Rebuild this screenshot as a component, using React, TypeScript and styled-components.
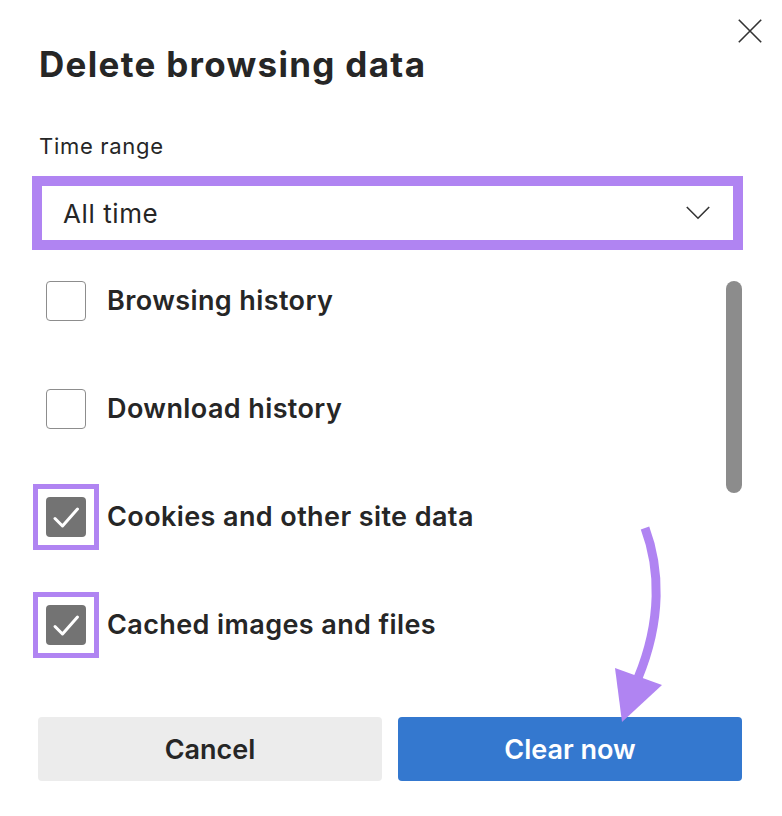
import React from "react";
import styled, { createGlobalStyle, css } from "styled-components";

const PURPLE = "#b084f2";
const INK = "#262626";

const Global = createGlobalStyle`
  html, body { margin: 0; padding: 0; background: #ffffff; }
  body { font-family: Inter, "Open Sans", "Liberation Sans", sans-serif; color: ${INK}; }
  * { box-sizing: border-box; }
`;

const Dialog = styled.div`
  position: relative;
  width: 782px;
  height: 816px;
  padding: 0 40px 0 38px;
  overflow: hidden;
`;

const Header = styled.div`
  display: flex;
  justify-content: space-between;
  align-items: flex-start;
  padding-top: 19px;
  margin-right: -20px;
`;

const Title = styled.h1`
  margin: 24px 0 0 1px;
  font-size: 35px;
  line-height: 42px;
  font-weight: 700;
  letter-spacing: 1.3px;
`;

const CloseButton = styled.button`
  width: 24px;
  height: 24px;
  padding: 0;
  border: none;
  background: transparent;
  display: flex;
  cursor: pointer;
`;

const FieldLabel = styled.div`
  margin-top: 48px;
  padding-left: 1px;
  font-size: 22px;
  line-height: 26px;
  font-weight: 400;
  letter-spacing: 0.7px;
`;

const Dropdown = styled.div<{ $highlight?: boolean }>`
  margin: 17px -1px 0 -6px;
  height: 74px;
  display: flex;
  align-items: center;
  justify-content: space-between;
  padding: 0 32px 0 30px;
  font-size: 26px;
  font-weight: 400;
  letter-spacing: 0.6px;
  background: #fff;
  border: 1px solid #8d8d8d;
  ${(p) =>
    p.$highlight &&
    css`
      border: 10px solid ${PURPLE};
      padding: 0 23px 0 21px;
    `}
`;

const List = styled.div`
  display: flex;
  margin-top: 31px;
`;

const Items = styled.div`
  flex: 1;
  display: flex;
  flex-direction: column;
  gap: 68px;
  padding-left: 8px;
`;

const ScrollTrack = styled.div`
  width: 16px;
`;

const ScrollThumb = styled.div`
  height: 212px;
  border-radius: 8px;
  background: #8c8c8c;
`;

const Row = styled.label`
  display: flex;
  align-items: center;
  gap: 21px;
  height: 40px;
`;

const Box = styled.span<{ $checked?: boolean; $highlight?: boolean }>`
  position: relative;
  flex: none;
  width: 40px;
  height: 40px;
  border-radius: 4px;
  display: flex;
  align-items: center;
  justify-content: center;
  border: 1.5px solid #8d8d8d;
  background: #fff;
  ${(p) =>
    p.$checked &&
    css`
      border: none;
      background: #737373;
    `}
  ${(p) =>
    p.$highlight &&
    css`
      &::after {
        content: "";
        position: absolute;
        left: -13px;
        top: -13px;
        width: 66px;
        height: 66px;
        border: 5px solid ${PURPLE};
        box-sizing: border-box;
      }
    `}
`;

const ItemText = styled.span`
  font-size: 27px;
  line-height: 32px;
  font-weight: 600;
  letter-spacing: 0.4px;
`;

const Actions = styled.div`
  display: grid;
  grid-template-columns: 1fr 1fr;
  gap: 16px;
  margin-top: 72px;
`;

const Button = styled.button<{ $primary?: boolean }>`
  height: 64px;
  border: none;
  border-radius: 4px;
  font-family: inherit;
  font-size: 27px;
  font-weight: 600;
  cursor: pointer;
  background: ${(p) => (p.$primary ? "#3478cf" : "#ececec")};
  color: ${(p) => (p.$primary ? "#ffffff" : INK)};
`;

const Annotation = styled.svg`
  position: absolute;
  left: 600px;
  top: 520px;
  width: 80px;
  height: 210px;
  pointer-events: none;
`;

const items = [
  { label: "Browsing history", checked: false },
  { label: "Download history", checked: false },
  { label: "Cookies and other site data", checked: true },
  { label: "Cached images and files", checked: true },
];

const Check = () => (
  <svg width="40" height="40" viewBox="0 0 40 40" fill="none">
    <path d="M9 21.5 L16.5 29 L31.5 12" stroke="#fff" strokeWidth="3" strokeLinecap="round" strokeLinejoin="round" />
  </svg>
);

export default function App() {
  return (
    <>
      <Global />
      <Dialog>
        <Header>
          <Title>Delete browsing data</Title>
          <CloseButton aria-label="Close">
            <svg width="24" height="24" viewBox="0 0 24 24" fill="none">
              <path d="M0.8 0.8 L23.2 23.2 M23.2 0.8 L0.8 23.2" stroke="#333" strokeWidth="1.6" />
            </svg>
          </CloseButton>
        </Header>
        <FieldLabel>Time range</FieldLabel>
        <Dropdown $highlight>
          <span>All time</span>
          <svg width="24" height="14" viewBox="0 0 24 14" fill="none">
            <path d="M0.8 1 L12 12.2 L23.2 1" stroke="#333" strokeWidth="1.6" />
          </svg>
        </Dropdown>
        <List>
          <Items>
            {items.map((it) => (
              <Row key={it.label}>
                <Box $checked={it.checked} $highlight={it.checked}>
                  {it.checked && <Check />}
                </Box>
                <ItemText>{it.label}</ItemText>
              </Row>
            ))}
          </Items>
          <ScrollTrack>
            <ScrollThumb />
          </ScrollTrack>
        </List>
        <Actions>
          <Button>Cancel</Button>
          <Button $primary>Clear now</Button>
        </Actions>
        <Annotation viewBox="600 520 80 210">
          <path d="M645 528 C 660 568, 662 620, 638 678" stroke={PURPLE} strokeWidth="9" fill="none" />
          <polygon points="615,668 662,685 622,722" fill={PURPLE} />
        </Annotation>
      </Dialog>
    </>
  );
}
